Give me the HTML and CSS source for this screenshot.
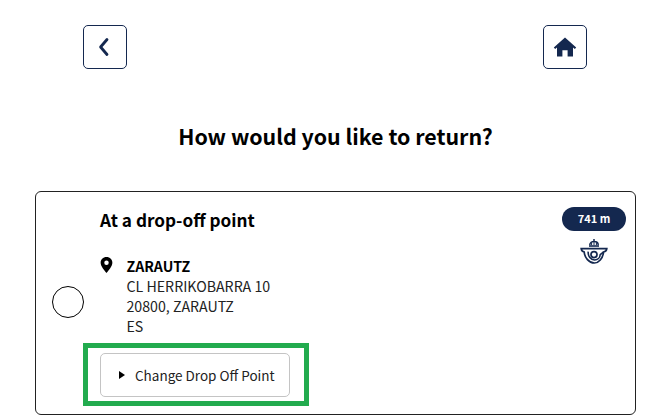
FILE: index.html
```html
<!DOCTYPE html>
<html lang="en">
<head>
  <meta charset="UTF-8">
  <title>How would you like to return?</title>
  <link rel="stylesheet" href="styles.css">
</head>
<body>
  <div class="nav">
    <a class="nav-btn" href="#" aria-label="Back">
      <svg width="14" height="22" viewBox="0 0 14 22"><path d="M9 3.5 L2.6 11 L9 18.5" fill="none" stroke="#14284f" stroke-width="2.8" stroke-linecap="round" stroke-linejoin="round"/></svg>
    </a>
    <a class="nav-btn" href="#" aria-label="Home">
      <svg width="24" height="20" viewBox="0 0 24 20"><path d="M12 .5 L23.2 10.4 L21.8 11.9 L20 10.4 V19.5 H14.6 V13.2 H9.4 V19.5 H4 V10.4 L2.2 11.9 L.8 10.4 Z" fill="#14284f"/></svg>
    </a>
  </div>

  <h1>How would you like to return?</h1>

  <div class="card">
    <div class="radio"></div>
    <div class="card-main">
      <h2>At a drop-off point</h2>
      <div class="address">
        <svg class="pin" width="13" height="16" viewBox="0 0 12 15"><path fill-rule="evenodd" d="M6 0 C2.7 0 .5 2.4 .5 5.3 C.5 8.6 4 12.4 6 15 C8 12.4 11.5 8.6 11.5 5.3 C11.5 2.4 9.3 0 6 0 Z M6 3.3 A2.1 2.1 0 1 1 6 7.5 A2.1 2.1 0 1 1 6 3.3 Z" fill="#000"/></svg>
        <div>
          <strong>ZARAUTZ</strong>
          <div>CL HERRIKOBARRA 10</div>
          <div>20800, ZARAUTZ</div>
          <div>ES</div>
        </div>
      </div>
      <div class="highlight">
        <button class="change-btn"><span class="arrow"></span>Change Drop Off Point</button>
      </div>
    </div>
    <div class="card-side">
      <span class="distance">741 m</span>
      <svg width="28" height="25" viewBox="0 0 28 25" fill="none" stroke="#14284f">
        <path d="M14 0 V2 M9.8 6 C9.8 3.6 12 2.6 14 2.6 C16 2.6 18.2 3.6 18.2 6" stroke-width="1.5"/>
        <path d="M11.6 3.6 V6 M14 3 V6 M16.4 3.6 V6" stroke-width="1"/>
        <path d="M9 7 H19" stroke-width="1.6"/>
        <path d="M1.2 9.6 H26.8 C26.6 11.6 25.2 12.6 23.6 13 C22.8 19.6 18.6 24 14.4 24 C9 24 4.6 18.6 4.2 13 C2.6 12.6 1.4 11.4 1.2 9.6 Z" stroke-width="1.7"/>
        <circle cx="14" cy="15.6" r="3" stroke-width="1.7"/>
        <path d="M8.2 12.6 C7.8 17.4 10.8 21 14.6 21 C17.6 21 20 18.6 20.2 15.6 L23.6 13" stroke-width="1.6"/>
      </svg>
    </div>
  </div>
</body>
</html>
```
FILE: styles.css
```css
body {
  font-family: "Noto Sans CJK SC", "Noto Sans", sans-serif;
  margin: 0;
  padding: 25px 22px 0 35px;
  color: #000;
  background: #fff;
  overflow: hidden;
}
.nav {
  display: flex;
  justify-content: space-between;
  padding: 0 49px 0 48px;
}
.nav-btn {
  width: 44px;
  height: 44px;
  box-sizing: border-box;
  border: 1px solid #14284f;
  border-radius: 5px;
  display: flex;
  align-items: center;
  justify-content: center;
}
h1 {
  margin: 52px 0 40px 0;
  font-size: 21.4px;
  line-height: 30px;
  font-weight: 700;
  text-align: center;
}
.card {
  display: flex;
  height: 224px;
  box-sizing: border-box;
  width: 601px;
  border: 1px solid #222;
  border-radius: 6px;
}
.radio {
  width: 32px;
  height: 32px;
  box-sizing: border-box;
  border: 1px solid #000;
  border-radius: 50%;
  margin: 94px 0 0 16px;
  flex-shrink: 0;
}
.card-main {
  flex: 1;
  padding: 15px 0 0 16px;
}
h2 {
  margin: 0 0 23px 0;
  font-size: 17.2px;
  line-height: 26px;
  font-weight: 700;
}
.address {
  display: flex;
  gap: 13.5px;
  font-size: 14.2px;
  line-height: 20px;
  color: #222;
}
.address strong {
  color: #000;
}
.pin {
  margin-top: 1px;
}
.highlight {
  width: 226px;
  box-sizing: border-box;
  border: 5px solid #22ab4e;
  margin: 7px 0 0 -17px;
  padding: 5px 12px 4px;
}
.change-btn {
  display: flex;
  align-items: center;
  width: 190px;
  height: 44px;
  box-sizing: border-box;
  padding: 0 0 1px 18px;
  background: #fff;
  border: 1px solid #c4c4c4;
  border-radius: 5px;
  font-family: inherit;
  font-size: 13.5px;
  color: #222;
}
.arrow {
  width: 0;
  height: 0;
  border-left: 6px solid #000;
  border-top: 4.5px solid transparent;
  border-bottom: 4.5px solid transparent;
  margin-right: 10px;
}
.card-side {
  display: flex;
  flex-direction: column;
  align-items: center;
  gap: 8px;
  padding: 15px 9px 0 0;
}
.distance {
  width: 64px;
  height: 24px;
  border-radius: 12px;
  background: #14284f;
  color: #fff;
  font-size: 11px;
  font-weight: 700;
  line-height: 23px;
  text-align: center;
}
```
